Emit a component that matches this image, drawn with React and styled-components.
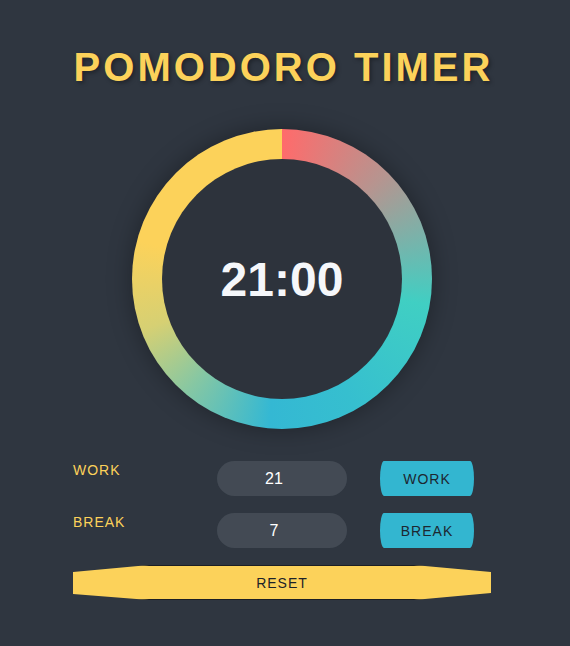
import React from "react";
import styled, { createGlobalStyle } from "styled-components";

const Global = createGlobalStyle`
  html, body { margin: 0; padding: 0; background: #2f3640; }
  body { font-family: "Liberation Sans", Arial, sans-serif; }
`;

const Page = styled.div`
  min-height: 646px;
  background: #2f3640;
  padding: 44px 0 0 73px;
  box-sizing: border-box;
`;

const Wrapper = styled.div`
  width: 418px;
  display: flex;
  flex-direction: column;
  align-items: stretch;
`;

const Title = styled.h1`
  margin: 0 -20px;
  font-size: 40px;
  line-height: 46px;
  font-weight: 700;
  letter-spacing: 3px;
  white-space: nowrap;
  color: #fcd25a;
  text-align: center;
  padding-left: 3px;
  text-shadow: 2px 2px 4px rgba(0, 0, 0, 0.35);
`;

const RingOuter = styled.div`
  align-self: center;
  margin-top: 39px;
  width: 300px;
  height: 300px;
  border-radius: 50%;
  background: conic-gradient(
    #ff6b6b 0deg,
    #b59590 45deg,
    #40cfc3 100deg,
    #36bfcf 150deg,
    #34b8d3 185deg,
    #86c7a3 220deg,
    #d6d073 250deg,
    #fcd25a 285deg,
    #fcd25a 360deg
  );
  box-shadow: 0 0 24px rgba(0, 0, 0, 0.35);
  display: flex;
  align-items: center;
  justify-content: center;
`;

const RingInner = styled.div`
  width: 240px;
  height: 240px;
  border-radius: 50%;
  background: #2d333c;
  display: flex;
  align-items: center;
  justify-content: center;
`;

const Time = styled.div`
  font-size: 48px;
  font-weight: 700;
  color: #f5f7fa;
  line-height: 1;
  padding-top: 2px;
`;

const Controls = styled.div`
  margin-top: 32px;
  display: flex;
  flex-direction: column;
  gap: 17px;
`;

const Row = styled.div`
  display: grid;
  grid-template-columns: 144px 130px 1fr;
  align-items: start;
`;

const Label = styled.label`
  font-size: 14px;
  line-height: 16px;
  letter-spacing: 1px;
  color: #fcd25a;
  padding-top: 1px;
`;

const Field = styled.div`
  height: 35px;
  border-radius: 18px;
  background: #434a54;
  color: #ffffff;
  font-size: 16px;
  display: flex;
  align-items: center;
  justify-content: center;
  padding-right: 16px;
  box-sizing: border-box;
`;

const SetButton = styled.button`
  justify-self: end;
  margin-right: 17px;
  width: 94px;
  height: 35px;
  border: none;
  border-radius: 4px / 50%;
  background: #33b6d0;
  color: #1d2730;
  font-family: "Liberation Sans", Arial, sans-serif;
  font-size: 14px;
  letter-spacing: 1px;
  padding: 0;
`;

const ResetButton = styled.button`
  height: 35px;
  border: none;
  border-top: 1px solid #1c1f24;
  border-bottom: 1px solid #1c1f24;
  background: #fcd25a;
  clip-path: polygon(0 7px, 76px 0, 341px 0, 100% 7px, 100% 28px, 341px 100%, 76px 100%, 0 29px);
  color: #1d2228;
  font-family: "Liberation Sans", Arial, sans-serif;
  font-size: 14px;
  letter-spacing: 1px;
  padding: 0;
`;

export default function App() {
  return (
    <>
      <Global />
      <Page>
        <Wrapper>
          <Title>POMODORO TIMER</Title>
          <RingOuter>
            <RingInner>
              <Time>21:00</Time>
            </RingInner>
          </RingOuter>
          <Controls>
            <Row>
              <Label>WORK</Label>
              <Field>21</Field>
              <SetButton>WORK</SetButton>
            </Row>
            <Row>
              <Label>BREAK</Label>
              <Field>7</Field>
              <SetButton>BREAK</SetButton>
            </Row>
            <ResetButton>RESET</ResetButton>
          </Controls>
        </Wrapper>
      </Page>
    </>
  );
}
